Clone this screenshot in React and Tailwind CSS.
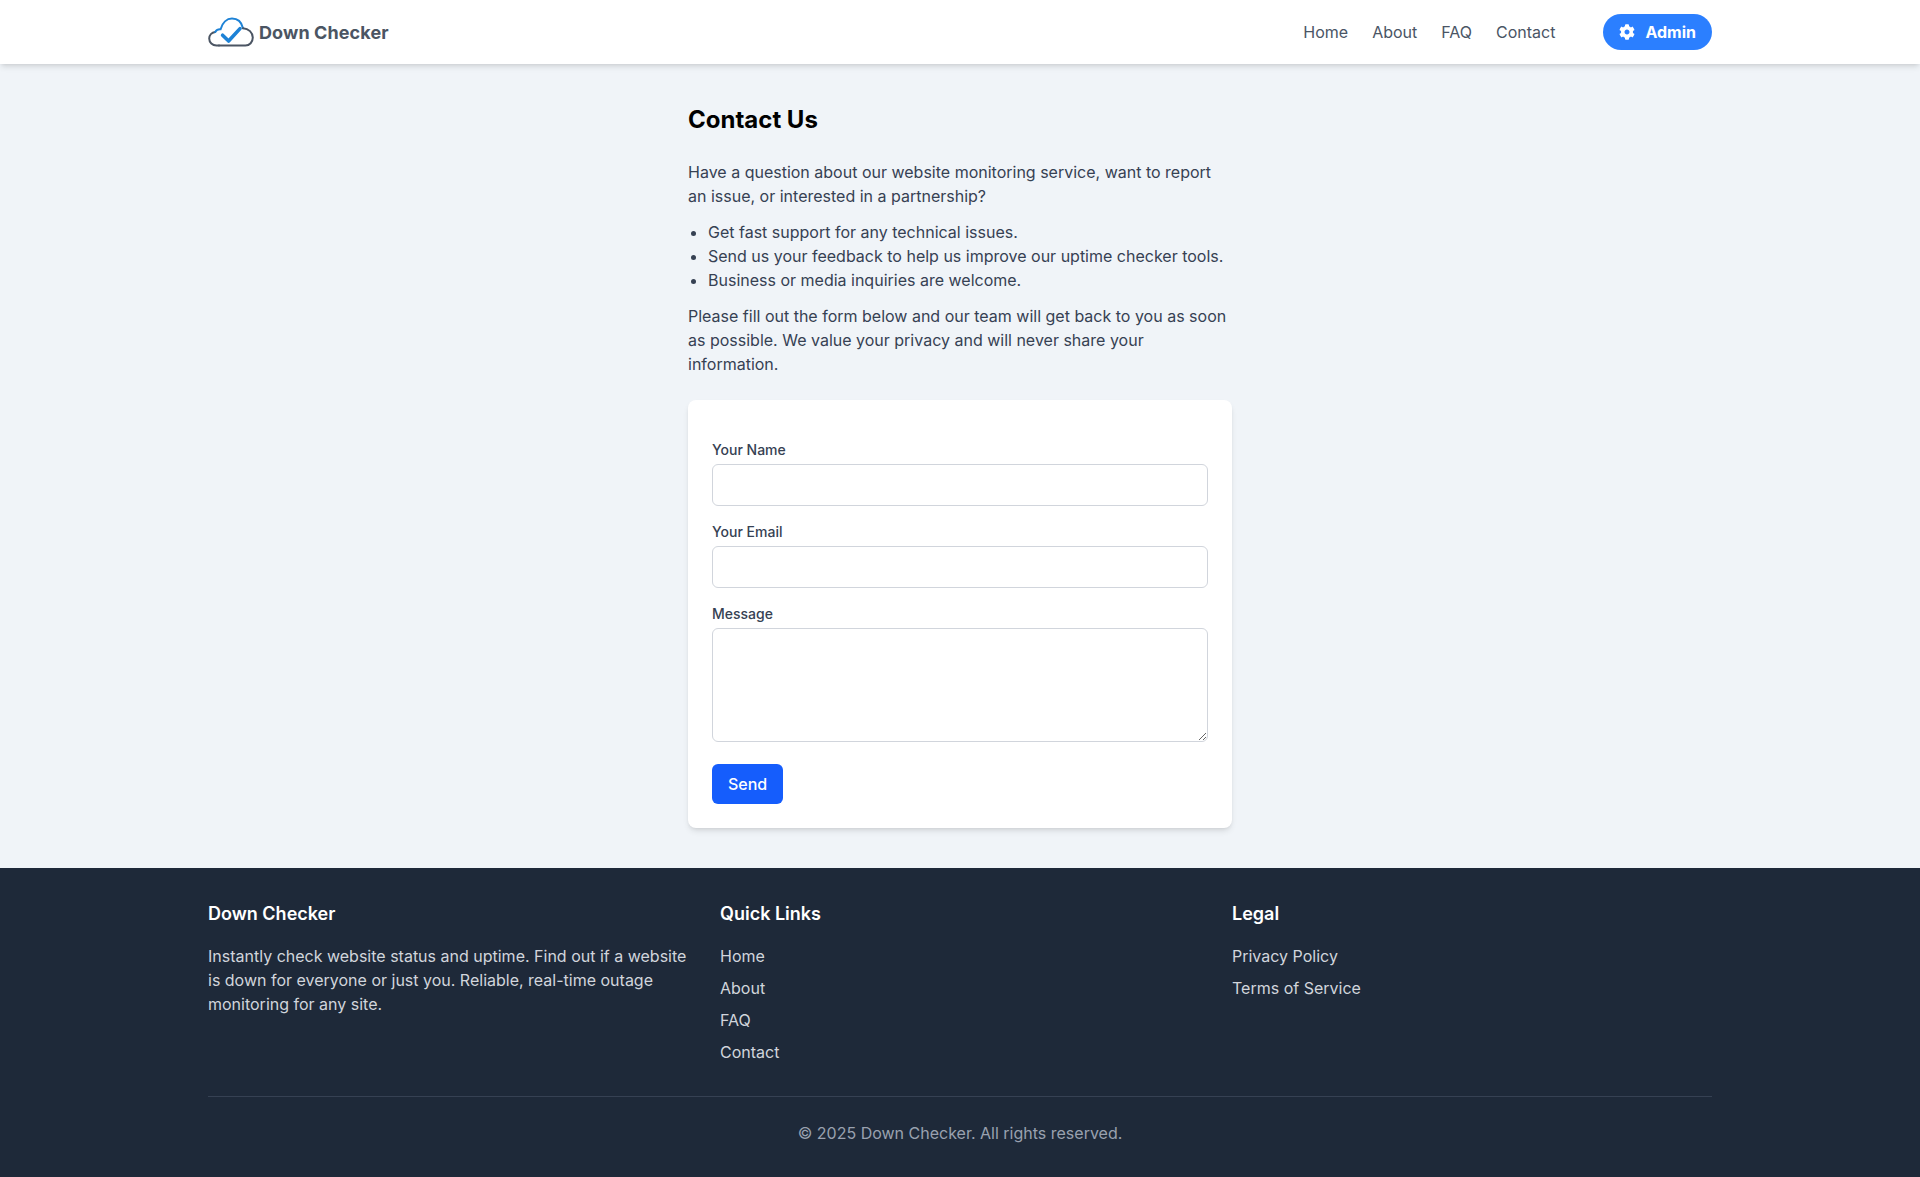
import React from 'react';
import { FaCog } from 'react-icons/fa';

const navLinks = ['Home', 'About', 'FAQ', 'Contact'];

function Logo() {
  return (
    <a href="#" className="flex items-center gap-[5px]">
      <svg width="46" height="30" viewBox="0 0 46 30" fill="none">
        <path d="M11 28.5H8.5C4.4 28.5 1.2 25.4 1.2 21.6C1.2 18.2 3.8 15.4 7.2 14.9" stroke="#4b5563" strokeWidth="2" strokeLinecap="round" />
        <path d="M7.2 14.9C8.4 12.9 10.4 12 12.6 12.2C14.4 6 18.8 1.6 24 1.6C29.6 1.6 33.6 5.4 35 11.2" stroke="#1d82d6" strokeWidth="2" strokeLinecap="round" />
        <path d="M35 11.2C40.6 11.4 44.8 15.6 44.8 20.6C44.8 25 41.6 28.5 37.4 28.5H11" stroke="#4b5563" strokeWidth="2" strokeLinecap="round" />
        <path d="M14.6 18.2L20.6 24L32 11.6" stroke="#1d82d6" strokeWidth="3.6" strokeLinecap="round" strokeLinejoin="round" />
      </svg>
      <span className="text-[18px] font-bold text-[#4b5563] tracking-[0.1px] font-['Inter',sans-serif]">Down Checker</span>
    </a>
  );
}

function Header() {
  return (
    <header className="bg-white shadow-md">
      <div className="max-w-[1504px] mx-auto h-16 flex items-center justify-between">
        <Logo />
        <nav className="flex items-center">
          <div className="flex items-center gap-6 mr-12">
            {navLinks.map((link) => (
              <a key={link} href="#" className="text-gray-600">{link}</a>
            ))}
          </div>
          <a href="#" className="flex items-center gap-[10px] h-9 px-4 rounded-full bg-blue-500 text-white font-bold">
            <FaCog className="w-4 h-4" />
            Admin
          </a>
        </nav>
      </div>
    </header>
  );
}

function ContactForm() {
  const fieldClass = 'w-full px-3 py-2 border border-gray-300 rounded-md bg-white';
  return (
    <form className="bg-white rounded-lg shadow-md p-6 pt-10">
      <div className="mb-4">
        <label className="block text-sm font-medium text-gray-700 mb-1">Your Name</label>
        <input type="text" className={fieldClass} />
      </div>
      <div className="mb-4">
        <label className="block text-sm font-medium text-gray-700 mb-1">Your Email</label>
        <input type="email" className={fieldClass} />
      </div>
      <div className="mb-4">
        <label className="block text-sm font-medium text-gray-700 mb-1">Message</label>
        <textarea rows={4} className={fieldClass}></textarea>
      </div>
      <button type="button" className="h-10 px-4 rounded-md bg-blue-600 text-white font-medium">Send</button>
    </form>
  );
}

function Footer() {
  return (
    <footer className="bg-gray-800 py-8 text-gray-300">
      <div className="max-w-[1504px] mx-auto">
        <div className="grid grid-cols-3 gap-8">
          <div>
            <h3 className="text-lg font-semibold text-white mb-4">Down Checker</h3>
            <p>Instantly check website status and uptime. Find out if a website is down for everyone or just you. Reliable, real-time outage monitoring for any site.</p>
          </div>
          <div>
            <h3 className="text-lg font-semibold text-white mb-4">Quick Links</h3>
            <ul className="space-y-2">
              {navLinks.map((link) => (
                <li key={link}><a href="#">{link}</a></li>
              ))}
            </ul>
          </div>
          <div>
            <h3 className="text-lg font-semibold text-white mb-4">Legal</h3>
            <ul className="space-y-2">
              <li><a href="#">Privacy Policy</a></li>
              <li><a href="#">Terms of Service</a></li>
            </ul>
          </div>
        </div>
        <div className="mt-8 pt-6 border-t border-gray-700 text-center text-gray-400">
          © 2025 Down Checker. All rights reserved.
        </div>
      </div>
    </footer>
  );
}

export default function App() {
  return (
    <div className="min-h-screen bg-[#f0f4f8] font-['Inter',sans-serif]">
      <Header />
      <main className="max-w-[576px] mx-auto px-4 pt-10 pb-10 text-gray-700">
        <h1 className="text-2xl font-bold text-black mb-6">Contact Us</h1>
        <p className="mb-3">Have a question about our website monitoring service, want to report an issue, or interested in a partnership?</p>
        <ul className="list-disc pl-5 mb-3">
          <li>Get fast support for any technical issues.</li>
          <li>Send us your feedback to help us improve our uptime checker tools.</li>
          <li>Business or media inquiries are welcome.</li>
        </ul>
        <p className="mb-6">Please fill out the form below and our team will get back to you as soon as possible. We value your privacy and will never share your information.</p>
        <ContactForm />
      </main>
      <Footer />
    </div>
  );
}
